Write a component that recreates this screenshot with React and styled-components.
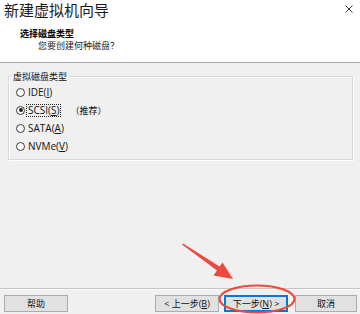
import React from 'react';
import styled, { createGlobalStyle } from 'styled-components';

const Global = createGlobalStyle`
  html, body { margin: 0; padding: 0; }
  body {
    width: 360px; height: 314px; overflow: hidden; background: #f0f0f0;
    font-family: "Noto Sans CJK SC", "Noto Sans", sans-serif; color: #111;
  }
`;

const UI_FONT = `"Open Sans", "Noto Sans CJK SC", sans-serif`;

const Window = styled.div`
  position: relative;
  width: 360px;
  height: 314px;
  display: flex;
  flex-direction: column;
  background: #f0f0f0;
`;

const Header = styled.header`
  height: 62px;
  background: #fff;
  border-bottom: 1px solid #a8a8a8;
  display: flex;
  flex-direction: column;
`;

const TitleRow = styled.div`
  display: flex;
  justify-content: space-between;
  align-items: center;
  height: 20px;
  padding: 0 7px 0 4px;
`;

const Title = styled.div`
  font-size: 15px;
  line-height: 20px;
  color: #1a1a1a;
`;

const CloseIcon = styled.svg`
  width: 8px;
  height: 8px;
  margin-top: -2px;
`;

const Subtitle = styled.div`
  margin: 8px 0 0 20px;
  font-size: 9px;
  line-height: 11px;
  font-weight: 700;
  color: #000;
`;

const Desc = styled.div`
  margin: 1px 0 0 38px;
  font-size: 9px;
  line-height: 11px;
  color: #222;
`;

const Body = styled.main`
  flex: 1;
  padding: 8px 7px 0 8px;
`;

const Group = styled.fieldset`
  margin: 0;
  padding: 1px 0 4px 0;
  border: 1px solid #d8d8d8;
  box-shadow: 1px 1px 0 #fff, inset 1px 1px 0 #fff;
`;

const Legend = styled.legend`
  margin-left: 2px;
  padding: 0 2px;
  font-size: 9px;
  line-height: 11px;
  color: #111;
`;

const Row = styled.label`
  display: flex;
  align-items: center;
  height: 18px;
  padding-left: 7px;
  font-family: ${UI_FONT};
  font-size: 10px;
  color: #111;
`;

const Radio = styled.span`
  box-sizing: border-box;
  width: 9px;
  height: 9px;
  border-radius: 50%;
  border: 1px solid #3a3a3a;
  background: #fff;
  display: flex;
  align-items: center;
  justify-content: center;
  margin-right: 2px;
  &::after {
    content: "";
    width: 4px;
    height: 4px;
    border-radius: 50%;
    background: ${p => (p.$checked ? '#222' : 'transparent')};
  }
`;

const LabelText = styled.span`
  line-height: 11px;
  padding: 0 1px;
  outline: ${p => (p.$focus ? '1px dotted #222' : 'none')};
`;

const Note = styled.span`
  margin-left: 10px;
  font-family: "Noto Sans CJK SC", sans-serif;
  font-size: 9px;
`;

const Footer = styled.footer`
  display: flex;
  align-items: flex-start;
  height: 26px;
  padding: 6px 3px 0 4px;
  box-sizing: border-box;
  border-top: 1px solid #c4c4c4;
  box-shadow: inset 0 1px 0 #fafafa;
`;

const Button = styled.button`
  box-sizing: border-box;
  width: ${p => p.$w || 64}px;
  height: 17px;
  margin: 0 ${p => p.$mr || 0}px 0 0;
  padding: 0;
  background: #e1e1e1;
  border: 1px solid ${p => (p.$default ? '#0078d7' : '#adadad')};
  box-shadow: ${p => (p.$default ? 'inset 0 0 0 1px #0078d7' : 'none')};
  font-family: ${UI_FONT};
  font-size: 9px;
  line-height: 15px;
  color: #111;
`;

const Spacer = styled.div`
  flex: 1;
`;

const Overlay = styled.svg`
  position: absolute;
  left: 0;
  top: 0;
  width: 360px;
  height: 314px;
  pointer-events: none;
`;

export default function App() {
  return (
    <Window>
      <Global />
      <Header>
        <TitleRow>
          <Title>新建虚拟机向导</Title>
          <CloseIcon viewBox="0 0 8 8">
            <path d="M0.5 0.5 L7.5 7.5 M7.5 0.5 L0.5 7.5" stroke="#333" strokeWidth="1" />
          </CloseIcon>
        </TitleRow>
        <Subtitle>选择磁盘类型</Subtitle>
        <Desc>您要创建何种磁盘？</Desc>
      </Header>
      <Body>
        <Group>
          <Legend>虚拟磁盘类型</Legend>
          <Row>
            <Radio />
            <LabelText>IDE(<u>I</u>)</LabelText>
          </Row>
          <Row>
            <Radio $checked />
            <LabelText $focus>SCSI(<u>S</u>)</LabelText>
            <Note>（推荐）</Note>
          </Row>
          <Row>
            <Radio />
            <LabelText>SATA(<u>A</u>)</LabelText>
          </Row>
          <Row>
            <Radio />
            <LabelText>NVMe(<u>V</u>)</LabelText>
          </Row>
        </Group>
      </Body>
      <Footer>
        <Button>帮助</Button>
        <Spacer />
        <Button $mr={5}>&lt; 上一步(<u>B</u>)</Button>
        <Button $mr={7} $default>下一步(<u>N</u>) &gt;</Button>
        <Button $w={62}>取消</Button>
      </Footer>
      <Overlay viewBox="0 0 360 314">
        <polygon points="182,244.5 183,243.5 222,268 219,272" fill="#ec4a3d" />
        <polygon points="233,279 213.5,275.5 222.5,262.5" fill="#ec4a3d" />
        <ellipse cx="257" cy="299" rx="37.5" ry="13.5" fill="none" stroke="#ec4a3d" strokeWidth="2.2" />
      </Overlay>
    </Window>
  );
}
